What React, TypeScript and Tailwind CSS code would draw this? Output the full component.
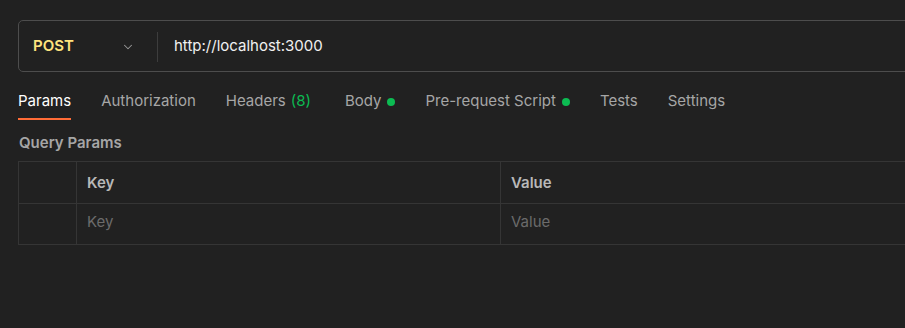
import { ChevronDown } from "lucide-react";

const tabs = [
  { label: "Params", active: true },
  { label: "Authorization" },
  { label: "Headers", count: "(8)" },
  { label: "Body", dot: true },
  { label: "Pre-request Script", dot: true },
  { label: "Tests" },
  { label: "Settings" },
];

function UrlBar() {
  return (
    <div className="flex h-[52px] w-[1000px] items-center rounded-[5px] border border-[#4d4d4d] pt-px">
      <div className="flex h-full w-[138px] items-center justify-between pl-[14px] pr-[22px]">
        <span className="text-[15px] font-semibold text-[#ffe47e]">POST</span>
        <ChevronDown size={14} strokeWidth={1.75} className="text-[#9a9a9a]" />
      </div>
      <div className="h-[30px] w-px bg-[#3d3d3d]" />
      <span className="pl-4 text-[15px] text-[#f0f0f0]">http://localhost:3000</span>
    </div>
  );
}

function Tabs() {
  return (
    <div className="mt-3 flex gap-[30px]">
      {tabs.map((t) => (
        <div
          key={t.label}
          className={
            "flex h-[36px] items-center gap-[6px] border-b-2 pt-px text-[15px] " +
            (t.active ? "border-[#ff6c37] text-white" : "border-transparent text-[#a6a6a6]")
          }
        >
          <span>
            {t.label}
            {t.count && <span className="ml-[5px] mr-[4px] text-[#0cbb52]">{t.count}</span>}
          </span>
          {t.dot && <span className="h-[8px] w-[8px] rounded-full bg-[#0cbb52]" />}
        </div>
      ))}
    </div>
  );
}

function ParamsTable() {
  return (
    <div className="mt-[9px] grid w-[1000px] grid-cols-[58px_424px_1fr] border-l border-t border-[#353535] text-[15px]">
      <div className="h-[42px] border-b border-r border-[#353535]" />
      <div className="flex h-[42px] items-center border-b border-r border-[#353535] pl-[10px] pt-[2px] font-semibold text-[#b8b8b8]">
        Key
      </div>
      <div className="flex h-[42px] items-center border-b border-[#353535] pl-[10px] pt-[2px] font-semibold text-[#b8b8b8]">
        Value
      </div>
      <div className="h-[41px] border-b border-r border-[#353535]" />
      <div className="flex h-[41px] items-center border-b border-r border-[#353535] pb-[4px] pl-[10px] text-[#6b6b6b]">
        Key
      </div>
      <div className="flex h-[41px] items-center border-b border-[#353535] pb-[4px] pl-[10px] text-[#6b6b6b]">
        Value
      </div>
    </div>
  );
}

export default function App() {
  return (
    <div
      className="h-[328px] w-[905px] overflow-hidden bg-[#212121] pl-[18px] pt-5"
      style={{ fontFamily: "Inter, 'Noto Sans', sans-serif" }}
    >
      <UrlBar />
      <Tabs />
      <div className="pl-px pt-[14px] text-[15px] font-semibold leading-[18px] text-[#a6a6a6]">
        Query Params
      </div>
      <ParamsTable />
    </div>
  );
}
